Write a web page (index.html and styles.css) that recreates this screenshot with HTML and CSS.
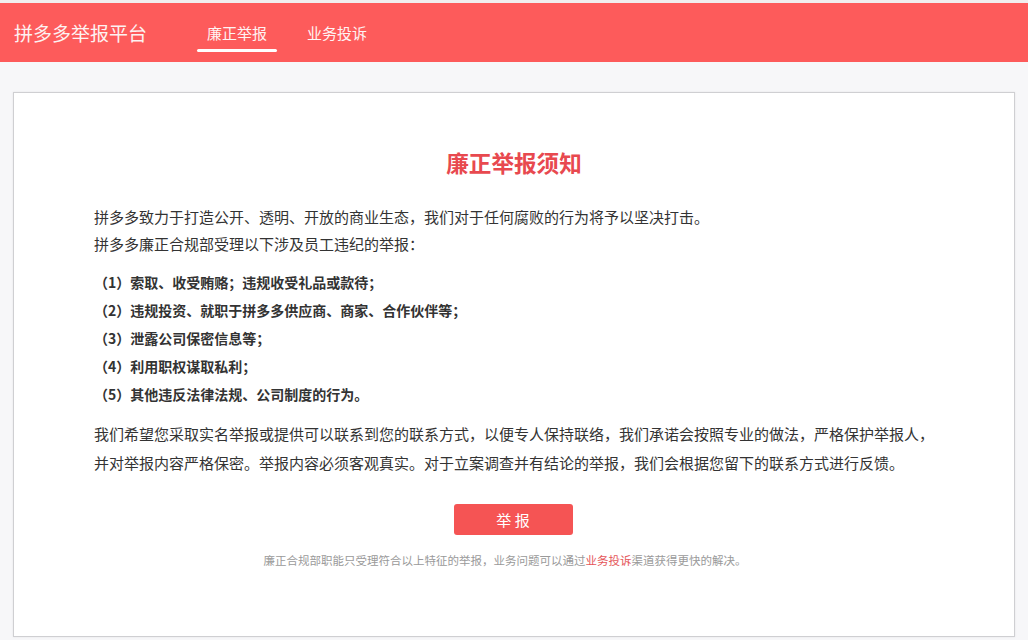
FILE: index.html
```html
<!DOCTYPE html>
<html lang="zh-CN">
<head>
<meta charset="utf-8">
<title>拼多多举报平台</title>
<link rel="stylesheet" href="styles.css">
</head>
<body>
<div class="topline"></div>
<header class="header">
  <div class="brand">拼多多举报平台</div>
  <nav class="nav">
    <a class="nav-item active">廉正举报</a>
    <a class="nav-item">业务投诉</a>
  </nav>
</header>
<main class="main">
  <section class="card">
    <h1 class="title">廉正举报须知</h1>
    <p class="intro">拼多多致力于打造公开、透明、开放的商业生态，我们对于任何腐败的行为将予以坚决打击。<br>拼多多廉正合规部受理以下涉及员工违纪的举报：</p>
    <ul class="list">
      <li>（1）索取、收受贿赂；违规收受礼品或款待；</li>
      <li>（2）违规投资、就职于拼多多供应商、商家、合作伙伴等；</li>
      <li>（3）泄露公司保密信息等；</li>
      <li>（4）利用职权谋取私利；</li>
      <li>（5）其他违反法律法规、公司制度的行为。</li>
    </ul>
    <p class="desc">我们希望您采取实名举报或提供可以联系到您的联系方式，以便专人保持联络，我们承诺会按照专业的做法，严格保护举报人，<br>并对举报内容严格保密。举报内容必须客观真实。对于立案调查并有结论的举报，我们会根据您留下的联系方式进行反馈。</p>
    <div class="actions"><button class="btn">举 报</button></div>
    <p class="note">廉正合规部职能只受理符合以上特征的举报，业务问题可以通过<a class="link">业务投诉</a>渠道获得更快的解决。</p>
  </section>
</main>
</body>
</html>
```

FILE: styles.css
```css
html, body {
  margin: 0;
  padding: 0;
}
body {
  background: #f7f7f9;
  font-family: "Microsoft YaHei", "Noto Sans CJK SC", "Noto Sans", sans-serif;
  color: #333;
  width: 1028px;
  height: 640px;
  overflow: hidden;
}
.topline {
  height: 3px;
  background: #f1eeee;
}
.header {
  height: 59px;
  background: #fd5b5b;
  display: flex;
  align-items: flex-start;
  padding: 20px 0 0 14px;
  box-sizing: border-box;
}
.brand {
  font-size: 19px;
  line-height: 20px;
  color: #fdf2f2;
}
.nav {
  display: flex;
  gap: 20px;
  margin-left: 50px;
}
.nav-item {
  display: flex;
  flex-direction: column;
  align-items: center;
  width: 80px;
  font-size: 15px;
  line-height: 20px;
  color: #fff3f3;
  cursor: pointer;
}
.nav-item.active::after {
  content: "";
  display: block;
  width: 80px;
  height: 3px;
  margin-top: 6px;
  border-radius: 2px;
  background: #ffffff;
}
.main {
  padding: 30px 13px 0 13px;
}
.card {
  background: #fff;
  border: 1px solid #cfcfd2;
  box-shadow: 0 0 2px rgba(0, 0, 0, 0.08);
  height: 545px;
  box-sizing: border-box;
  padding: 0 60px 0 80px;
}
.title {
  margin: 55px 0 0 0;
  font-size: 22.6px;
  line-height: 30px;
  font-weight: bold;
  text-align: center;
  color: #e8494f;
  padding-right: 20px;
}
.intro {
  margin: 25px 0 0 0;
  font-size: 15px;
  line-height: 27px;
  color: #333;
  white-space: nowrap;
}
.list {
  list-style: none;
  margin: 11px 0 0 0;
  padding: 0;
  font-size: 14px;
  line-height: 28px;
  font-weight: bold;
  color: #333;
}
.desc {
  margin: 11px 0 0 0;
  font-size: 15px;
  line-height: 29px;
  color: #333;
  white-space: nowrap;
}
.actions {
  display: flex;
  justify-content: center;
  margin-top: 27px;
  padding-right: 22px;
}
.btn {
  width: 119px;
  height: 31px;
  border: none;
  border-radius: 3px;
  background: #f55454;
  color: #fff;
  font-family: inherit;
  font-size: 15px;
  line-height: 31px;
  padding: 0;
  cursor: pointer;
}
.note {
  margin: 15px 0 0 0;
  font-size: 11.5px;
  line-height: 20px;
  color: #9a9a9a;
  text-align: center;
  padding-right: 38px;
  white-space: nowrap;
}
.link {
  color: #e5565a;
}
```
